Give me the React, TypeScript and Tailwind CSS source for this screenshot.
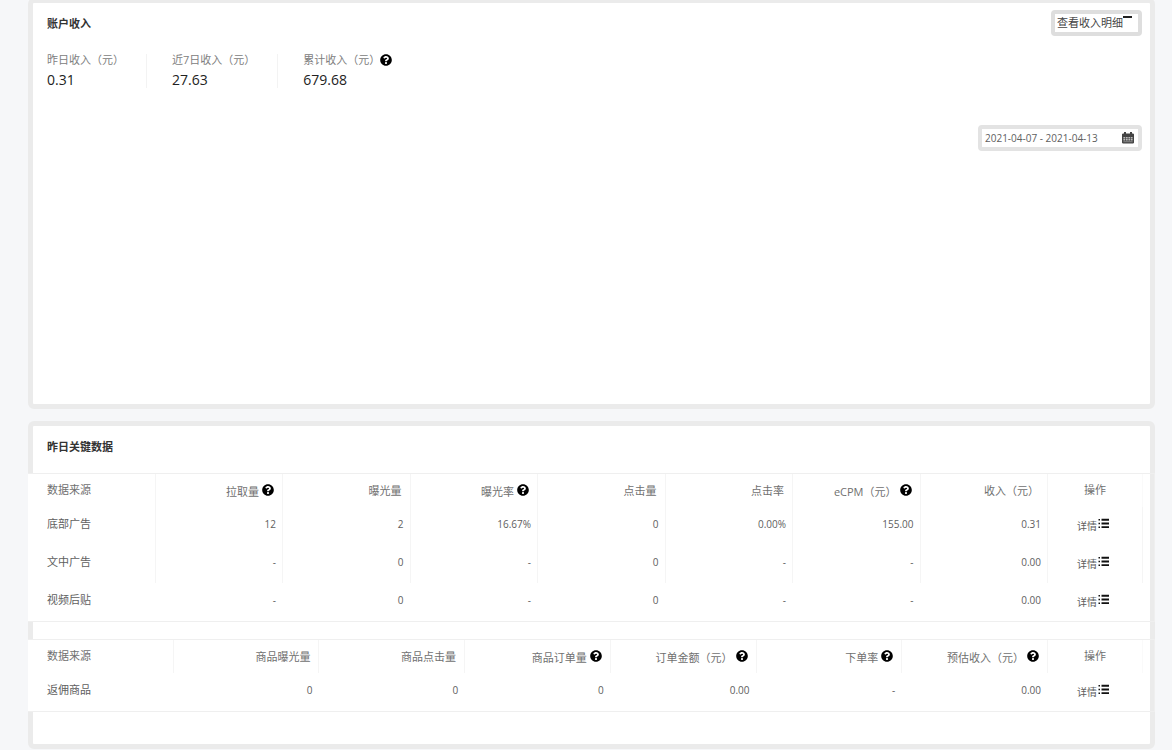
import React from "react";
import { FaQuestionCircle } from "react-icons/fa";

type Column = { label: string; help?: boolean };

const adColumns: Column[] = [
  { label: "拉取量", help: true },
  { label: "曝光量" },
  { label: "曝光率", help: true },
  { label: "点击量" },
  { label: "点击率" },
  { label: "eCPM（元）", help: true },
  { label: "收入（元）" },
];

const adRows = [
  ["底部广告", "12", "2", "16.67%", "0", "0.00%", "155.00", "0.31"],
  ["文中广告", "-", "0", "-", "0", "-", "-", "0.00"],
  ["视频后贴", "-", "0", "-", "0", "-", "-", "0.00"],
];

const goodsColumns: Column[] = [
  { label: "商品曝光量" },
  { label: "商品点击量" },
  { label: "商品订单量", help: true },
  { label: "订单金额（元）", help: true },
  { label: "下单率", help: true },
  { label: "预估收入（元）", help: true },
];

const goodsRows = [["返佣商品", "0", "0", "0", "0.00", "-", "0.00"]];

function HelpIcon() {
  return <FaQuestionCircle className="size-3 shrink-0 text-black" aria-hidden="true" />;
}

function ListIcon() {
  return (
    <svg viewBox="0 0 11 11" className="size-[11px] shrink-0" fill="#111" aria-hidden="true">
      <path d="M0.5 1h1.5v1.5H0.5zM0.5 4.7h1.5v1.5H0.5zM0.5 8.4h1.5v1.5H0.5zM3.5 0.8H11v1.9H3.5zM3.5 4.5H11v1.9H3.5zM3.5 8.2H11v1.9H3.5z" />
    </svg>
  );
}

function CalendarIcon() {
  return (
    <svg viewBox="0 0 12 12" className="size-3 shrink-0" aria-hidden="true">
      <path d="M2 0h2v1.5h4V0h2v1.5h1.2l.8.8v8.4l-.8.8H.8l-.8-.8V2.3l.8-.8H2z" fill="#444" />
      <path
        d="M1.4 5h1.8v1.4H1.4zM3.9 5h1.8v1.4H3.9zM6.4 5h1.8v1.4H6.4zM8.9 5h1.7v1.4H8.9zM1.4 7.1h1.8v1.4H1.4zM3.9 7.1h1.8v1.4H3.9zM6.4 7.1h1.8v1.4H6.4zM8.9 7.1h1.7v1.4H8.9z"
        fill="#bbb"
      />
      <path d="M1.4 9.2h9.2v1H1.4z" fill="#888" />
    </svg>
  );
}

function Stat({ label, value, help, last }: { label: string; value: string; help?: boolean; last?: boolean }) {
  return (
    <div className={last ? "" : "mr-[25px] border-r border-[#f3f3f3] pr-[22px]"}>
      <dt className="flex h-3 items-center text-[11px] leading-3 text-[#808080]">
        {label}
        {help && <HelpIcon />}
      </dt>
      <dd className="mt-1.5 text-sm leading-4 font-medium text-[#222]">{value}</dd>
    </div>
  );
}

function DataTable({
  name,
  columns,
  rows,
  columnLines,
}: {
  name: string;
  columns: Column[];
  rows: string[][];
  columnLines?: boolean;
}) {
  return (
    <div className="-mx-[5px] border-y border-r border-[#efefef]">
      <div className="mr-1 bg-white pr-[7px]">
        <table className="w-full table-fixed border-separate border-spacing-0" aria-label={name}>
          <thead className="text-[11px] text-[#707070]">
            <tr>
              <th className="h-[33px] border-r border-[#f5f5f5] pl-[19px] text-left font-normal">数据来源</th>
              {columns.map((c) => (
                <th key={c.label} className="h-[33px] border-r border-[#f5f5f5] pr-2 font-normal">
                  {c.help ? (
                    <span className="flex items-start justify-end gap-[3px] pt-[3px] leading-4">
                      {c.label}
                      <HelpIcon />
                    </span>
                  ) : (
                    <span className="block text-right leading-4">{c.label}</span>
                  )}
                </th>
              ))}
              <th className="h-[33px] w-[95px] border-r border-[#fafafa] text-center font-normal">操作</th>
            </tr>
          </thead>
          <tbody className="text-[10px] text-[#606060]">
            {rows.map((row, i) => {
              const line = columnLines && i < rows.length - 1 ? "border-[#f5f5f5]" : "border-transparent";
              return (
                <tr key={row[0]}>
                  {row.map((cell, j) =>
                    j === 0 ? (
                      <th
                        key={j}
                        scope="row"
                        className={`h-[38px] border-r pb-1 pl-[19px] text-left text-[11px] font-normal ${line}`}
                      >
                        {cell}
                      </th>
                    ) : (
                      <td key={j} className={`h-[38px] border-r pr-1.5 pb-1 text-right ${line}`}>
                        {cell}
                      </td>
                    ),
                  )}
                  <td className={`h-[38px] border-r pr-1 ${line}`}>
                    <a href="#detail" className="flex items-start justify-center gap-px leading-4">
                      {"详情"}
                      <ListIcon />
                    </a>
                  </td>
                </tr>
              );
            })}
          </tbody>
        </table>
      </div>
    </div>
  );
}

export default function App() {
  return (
    <div className="min-h-screen overflow-hidden bg-[#f6f7f9] pr-[17px] pl-7 font-['Open_Sans','Noto_Sans_CJK_SC',sans-serif]">
      <section className="-mt-[2px] min-h-[411px] rounded-md border-[5px] border-[#ebebeb] bg-white pr-2 pl-[14px]">
        <header className="flex items-start justify-between pt-[7px]">
          <h2 className="pt-[5px] text-[11px] leading-[18px] font-bold text-[#333]">账户收入</h2>
          <button
            type="button"
            className="flex h-[26px] items-start rounded border-4 border-[#dedede] bg-white pr-1.5 pl-0.5 text-[11px] leading-[18px] text-[#444]"
          >
            查看收入明细
            <svg viewBox="0 0 9 2" className="mt-0.5 h-0.5 w-[9px]" aria-hidden="true">
              <path d="M0 0h9v2H0z" fill="#222" />
            </svg>
          </button>
        </header>
        <dl className="mt-[18px] flex">
          <Stat label="昨日收入（元）" value="0.31" />
          <Stat label="近7日收入（元）" value="27.63" />
          <Stat label="累计收入（元）" value="679.68" help last />
        </dl>
        <div className="mt-[37px] flex justify-end">
          <label className="flex h-[26px] w-[164px] items-center rounded border-4 border-[#e3e3e3] bg-white pr-1 pl-[3px]">
            <input
              type="text"
              aria-label="日期范围"
              defaultValue="2021-04-07 - 2021-04-13"
              className="min-w-0 flex-1 text-[10px] leading-4 text-[#606060] outline-none"
            />
            <CalendarIcon />
          </label>
        </div>
      </section>

      <section className="mt-3 rounded-md border-[5px] border-[#ebebeb] bg-white pb-8">
        <h2 className="h-[47px] pt-3 pl-[14px] text-[11px] leading-[18px] font-bold text-[#333]">昨日关键数据</h2>
        <DataTable name="昨日关键数据" columns={adColumns} rows={adRows} columnLines />
        <div className="h-[17px]" />
        <DataTable name="返佣商品数据" columns={goodsColumns} rows={goodsRows} />
      </section>
    </div>
  );
}
